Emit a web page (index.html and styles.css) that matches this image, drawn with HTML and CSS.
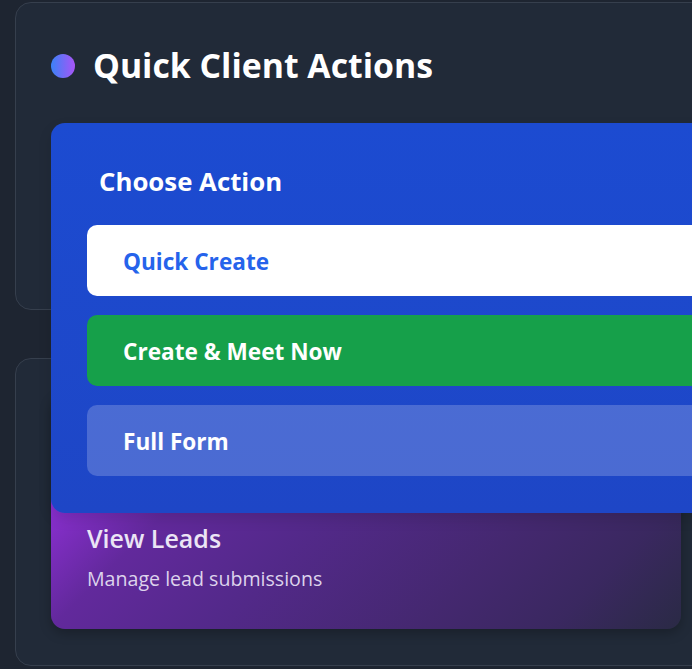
FILE: index.html
```html
<!DOCTYPE html>
<html lang="en">
<head>
<meta charset="utf-8">
<title>Quick Client Actions</title>
<link rel="stylesheet" href="styles.css">
</head>
<body>
<div class="page">
  <section class="card card-top">
    <div class="card-header">
      <span class="dot"></span>
      <h2 class="card-title">Quick Client Actions</h2>
    </div>
    <div class="trigger-space"></div>
  </section>

  <section class="card card-bottom">
    <div class="lead-card">
      <div class="lead-icon-space"></div>
      <h3 class="lead-title">View Leads</h3>
      <p class="lead-sub">Manage lead submissions</p>
    </div>
  </section>

  <div class="menu">
    <h3 class="menu-title">Choose Action</h3>
    <div class="menu-list">
      <button class="menu-btn btn-white">Quick Create</button>
      <button class="menu-btn btn-green">Create &amp; Meet Now</button>
      <button class="menu-btn btn-ghost">Full Form</button>
    </div>
  </div>
</div>
</body>
</html>
```

FILE: styles.css
```css
* { box-sizing: border-box; }
html, body {
  margin: 0;
  padding: 0;
  width: 692px;
  height: 669px;
  overflow: hidden;
  background: #1e2531;
  font-family: "Open Sans", "Noto Sans", sans-serif;
}
.page {
  position: relative;
  padding: 2px 0 0 15px;
  display: flex;
  flex-direction: column;
  gap: 48px;
}
.card {
  width: 720px;
  background: #212a38;
  border: 1px solid #363f4d;
  border-radius: 16px;
}
.card-top {
  height: 308px;
  padding: 34px 36px 0 35px;
}
.card-header {
  display: flex;
  align-items: center;
  gap: 18px;
  height: 56px;
}
.dot {
  width: 24px;
  height: 24px;
  border-radius: 50%;
  background: linear-gradient(90deg, #3b82f6, #a855f7);
  flex: none;
  margin-top: 2px;
}
.card-title {
  margin: 0;
  color: #ffffff;
  font-size: 33.8px;
  font-weight: 700;
  letter-spacing: 0;
  line-height: 44px;
}
.card-bottom {
  height: 308px;
  padding: 35px 0 36px 35px;
}
.lead-card {
  width: 630px;
  height: 235px;
  border-radius: 14px;
  padding: 36px 36px;
  background: linear-gradient(135deg, #a436ea 0%, #8a2fd0 13%, #62299c 27%, #53298a 45%, #44286f 70%, #3a2860 85%, #2a2a45 100%);
  display: flex;
  flex-direction: column;
  box-shadow: 0 4px 12px rgba(0,0,0,0.25);
}
.lead-icon-space { height: 91px; flex: none; }
.lead-title {
  margin: 0;
  color: #ebe5f5;
  font-size: 25px;
  font-weight: 600;
  letter-spacing: 0;
  line-height: 34px;
}
.lead-sub {
  margin: 11px 0 0;
  color: #ddd3ec;
  font-size: 19.6px;
  font-weight: 400;
  letter-spacing: 0;
  line-height: 26px;
}
.menu {
  position: absolute;
  left: 51px;
  top: 123px;
  width: 700px;
  height: 390px;
  border-radius: 14px;
  background: linear-gradient(180deg, #1c4bd1 0%, #1e46c6 100%);
  padding: 39px 0 36px 36px;
  box-shadow: 0 6px 14px rgba(0,0,0,0.12);
}
.menu-title {
  margin: 0 0 25px 12px;
  color: #ffffff;
  font-size: 25.8px;
  font-weight: 700;
  letter-spacing: 0;
  line-height: 38px;
}
.menu-list {
  display: flex;
  flex-direction: column;
  gap: 19px;
}
.menu-btn {
  display: block;
  width: 100%;
  height: 71px;
  border: none;
  border-radius: 10px;
  padding: 3px 36px 0 36px;
  text-align: left;
  font-family: inherit;
  font-size: 22.6px;
  font-weight: 700;
  letter-spacing: 0;
  line-height: 30px;
}
.btn-white { background: #ffffff; color: #2563eb; }
.btn-green { background: #16a04a; color: #ffffff; }
.btn-ghost { background: rgba(255,255,255,0.2); color: #ffffff; }
```
